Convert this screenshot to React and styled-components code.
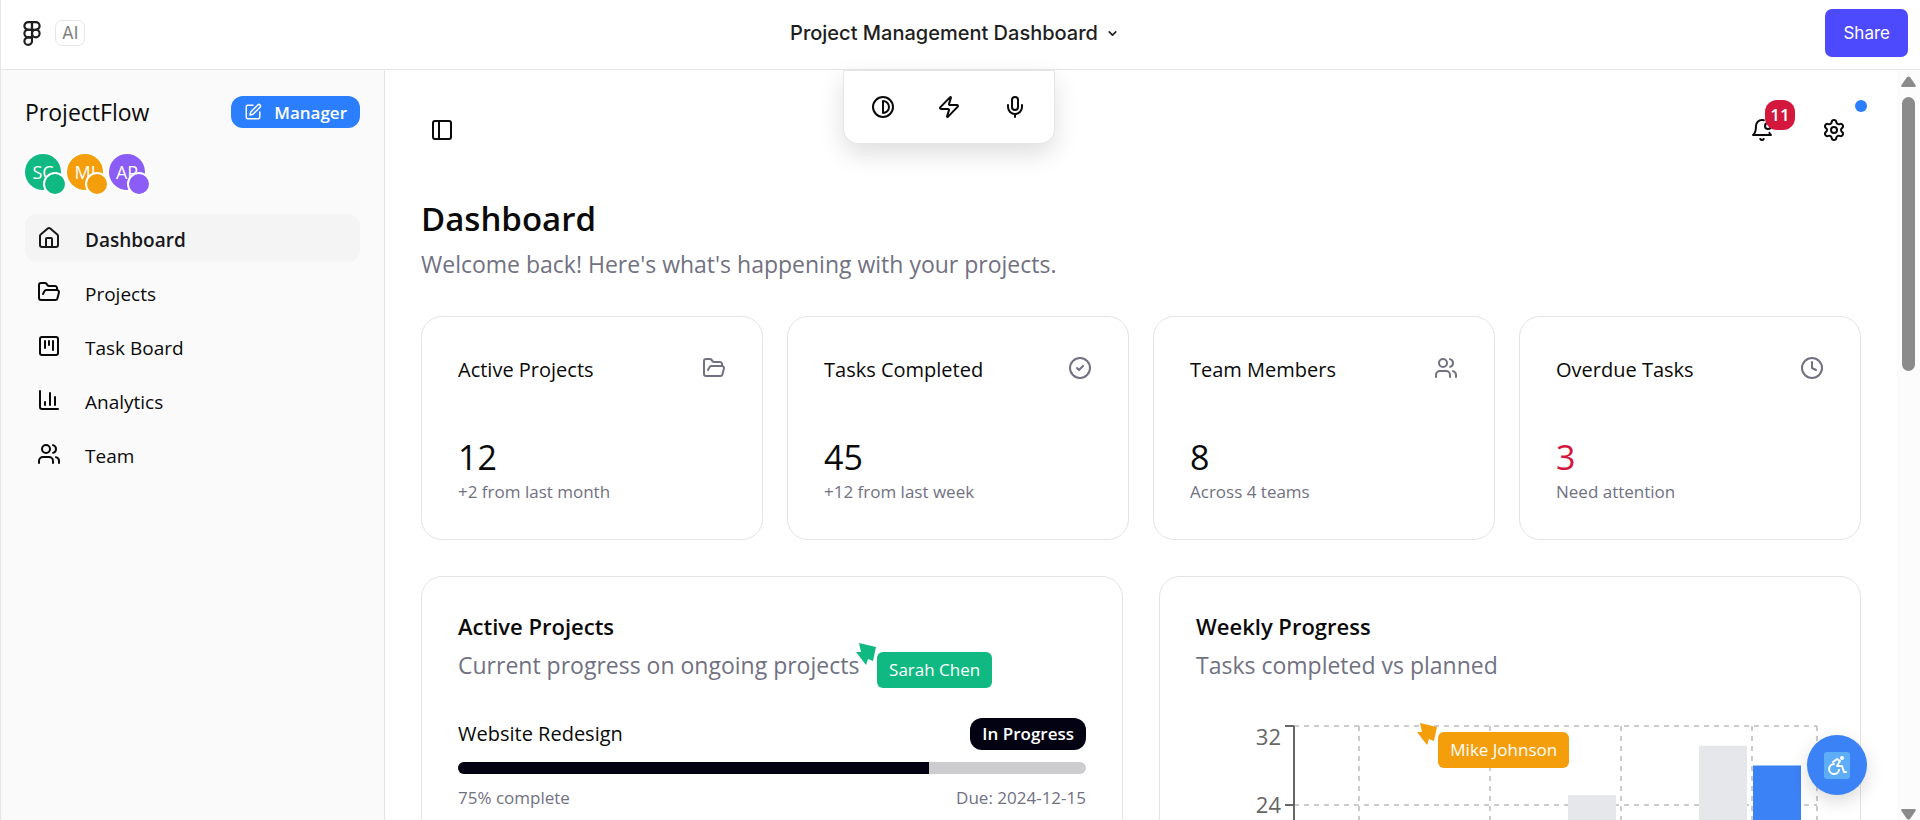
import React from "react";
import styled, { createGlobalStyle } from "styled-components";
import {
  ChartColumn, ChevronDown, CircleCheck, Clock, Contrast, Figma, FolderOpen, House,
  Mic, PanelLeft, Settings, SquareKanban, SquarePen, Users, Zap,
} from "lucide-react";

const GlobalStyle = createGlobalStyle`
  *, *::before, *::after { box-sizing: border-box; }
  body { margin: 0; background: #fff; color: #0a0a0a; font-family: "Open Sans", "Noto Sans", sans-serif; }
  h1, h2, h3, p, ul { margin: 0; padding: 0; font-weight: 400; }
  button { font: inherit; color: inherit; border: 0; padding: 0; background: none; cursor: pointer; }
  svg { display: block; flex: none; }
`;

const Shell = styled.div`
  display: flex;
  flex-direction: column;
  height: 100vh;
  overflow: hidden;
  border-left: 1px solid #e6e6e6;
`;

const TopBar = styled.header`
  display: grid;
  grid-template-columns: 1fr auto 1fr;
  align-items: center;
  flex: none;
  height: 70px;
  padding: 0 12px 3px 18px;
  border-bottom: 1px solid #e6e6e6;
  font-family: Inter, sans-serif;
`;

const Brand = styled.div`
  display: flex;
  align-items: center;
  gap: 10px;
  color: #1e1e1e;
`;

const AiTag = styled.span`
  padding: 0 6px;
  border: 1px solid #e6e6e6;
  border-radius: 7px;
  color: #808080;
  font-size: 17px;
  line-height: 24px;
`;

const FileName = styled.button`
  display: flex;
  align-items: center;
  gap: 8px;
  padding-right: 18px;
  color: #1e1e1e;
  font-size: 20px;
  font-weight: 500;
  line-height: 28px;
`;

const ShareButton = styled.button`
  justify-self: end;
  height: 48px;
  padding: 0 18px;
  border-radius: 7px;
  background: #4d49fc;
  color: #fff;
  font-size: 17px;
`;

const Body = styled.div`
  display: flex;
  flex: 1;
  min-height: 0;
`;

const Frame = styled.div`
  position: relative;
  display: flex;
  flex: 1;
  min-width: 0;
`;

const Tray = styled.div`
  position: absolute;
  top: 0;
  left: 50%;
  transform: translateX(-50%);
  z-index: 2;
  display: flex;
  gap: 18px;
  padding: 12px 15px;
  border: 1px solid #e6e6e6;
  border-radius: 0 0 15px 15px;
  background: #fff;
  box-shadow: 0 10px 24px rgba(0, 0, 0, 0.13);
`;

const IconButton = styled.button`
  position: relative;
  display: grid;
  place-items: center;
  width: ${(p) => p.$width}px;
  height: 48px;
`;

const Sidebar = styled.aside`
  flex: none;
  width: 384px;
  padding: 24px;
  border-right: 1px solid #e4e4e6;
  background: #fafafa;
`;

const SidebarHead = styled.div`
  display: flex;
  align-items: center;
  justify-content: space-between;
  height: 36px;
`;

const AppName = styled.span`
  font-size: 23px;
  line-height: 36px;
`;

const RoleBadge = styled.button`
  display: flex;
  align-items: center;
  gap: 12px;
  height: 32px;
  padding: 0 13px;
  border-radius: 12px;
  background: #2b7fff;
  color: #fff;
  font-size: 17px;
  font-weight: 600;
`;

const Avatars = styled.div`
  display: flex;
  gap: 6px;
  margin: 24px 0;
`;

const Avatar = styled.span`
  position: relative;
  width: 36px;
  height: 36px;
  border-radius: 50%;
  background: ${(p) => p.$color};
  box-shadow: 0 0 0 2px #fff;
  color: #fff;
  font-size: 18px;
  line-height: 36px;
  text-align: center;

  &::after {
    content: "";
    position: absolute;
    right: -6px;
    bottom: -6px;
    width: 24px;
    height: 24px;
    border: 2px solid #fff;
    border-radius: 50%;
    background: ${(p) => p.$color};
  }
`;

const Nav = styled.nav`
  display: flex;
  flex-direction: column;
  gap: 6px;
`;

const NavLink = styled.a`
  display: flex;
  align-items: center;
  gap: 24px;
  height: 48px;
  padding: 0 12px;
  border-radius: 12px;
  background: ${(p) => (p.$active ? "#f4f4f5" : "transparent")};
  color: ${(p) => (p.$active ? "#18181b" : "#0a0a0a")};
  font-size: 19px;
  font-weight: ${(p) => (p.$active ? 600 : 400)};
  line-height: 26px;
  text-decoration: none;
`;

const NavLabel = styled.span`
  padding-top: 3px;
`;

const Main = styled.main`
  display: flex;
  flex: 1;
  flex-direction: column;
  gap: 36px;
  min-width: 0;
  padding: 36px 36px 0;
  overflow: hidden;
`;

const Tools = styled.div`
  display: flex;
  align-items: center;
  gap: 18px;

  & > :first-child { margin-right: auto; }
`;

const Count = styled.span`
  position: absolute;
  top: -6px;
  right: -6px;
  width: 30px;
  height: 30px;
  border-radius: 12px;
  background: #d4183d;
  color: #fff;
  font-size: 17px;
  font-weight: 600;
  line-height: 30px;
`;

const StatusDot = styled.span`
  position: absolute;
  top: -6px;
  right: -6px;
  width: 12px;
  height: 12px;
  border-radius: 50%;
  background: #2b7fff;
`;

const PageTitle = styled.h1`
  font-size: 33px;
  font-weight: 600;
  line-height: 58px;
`;

const Lead = styled.p`
  color: #717182;
  font-size: 23px;
  line-height: 32px;
`;

const Grid = styled.section`
  display: grid;
  grid-template-columns: repeat(${(p) => p.$columns}, minmax(0, 1fr));
  gap: ${(p) => p.$gap}px;
  flex: none;
`;

const Card = styled.article`
  padding: 36px;
  border: 1px solid #e4e4e6;
  border-radius: 21px;
  background: #fff;
`;

const StatHead = styled.div`
  display: flex;
  justify-content: space-between;
  height: 80px;
  padding-top: 3px;
  color: #717182;
`;

const StatLabel = styled.h2`
  color: #0a0a0a;
  font-size: 20px;
  line-height: 28px;
`;

const StatValue = styled.p`
  color: ${(p) => (p.$alert ? "#d4183d" : "#0a0a0a")};
  font-size: 34px;
  line-height: 48px;
`;

const Small = styled.p`
  color: #717182;
  font-size: 17px;
  line-height: 22px;
`;

const CardTitle = styled.h2`
  margin-bottom: 10px;
  font-size: 22px;
  font-weight: 600;
  line-height: 26px;
`;

const CardBody = styled.div`
  display: flex;
  flex-direction: column;
  gap: 12px;
  margin-top: 37px;
`;

const Split = styled.div`
  display: flex;
  align-items: center;
  justify-content: space-between;
  min-height: 24px;
`;

const ProjectName = styled.h3`
  font-size: 20px;
  line-height: 32px;
`;

const StatusBadge = styled.span`
  padding: 0 12px;
  border-radius: 12px;
  background: #030213;
  color: #fff;
  font-size: 17px;
  font-weight: 600;
  line-height: 32px;
`;

const Track = styled.div`
  height: 12px;
  border-radius: 6px;
  background: #cdcdd0;
  overflow: hidden;
`;

const Fill = styled.div`
  height: 100%;
  background: #030213;
`;

const Chart = styled.svg`
  width: 100%;
  margin-top: 37px;
  font-size: 22px;
`;

const Pointer = styled.div`
  position: absolute;
  left: ${(p) => p.$x}%;
  top: ${(p) => p.$y}px;
  z-index: 2;
  display: flex;
  color: ${(p) => p.$color};
`;

const PointerName = styled.span`
  margin-top: 10px;
  padding: 0 12px;
  border-radius: 6px;
  background: ${(p) => p.$color};
  color: #fff;
  font-size: 17px;
  line-height: 36px;
  white-space: nowrap;
`;

const ScrollBar = styled.div`
  display: flex;
  flex: none;
  flex-direction: column;
  align-items: center;
  width: 23px;
  padding-top: 6px;
  background: #fcfcfc;
  color: #8b8b8b;
`;

const ScrollTrack = styled.div`
  flex: 1;
  width: 13px;
  padding: 9px 0;
`;

const ScrollThumb = styled.div`
  height: 39%;
  border-radius: 7px;
  background: #8b8b8b;
`;

const HelpButton = styled.button`
  position: absolute;
  right: 30px;
  bottom: 25px;
  z-index: 3;
  display: grid;
  place-items: center;
  width: 60px;
  height: 60px;
  border-radius: 50%;
  background: #3b82f6;
  box-shadow: 0 6px 18px rgba(0, 0, 0, 0.15);
`;

const people = [
  { initials: "SC", color: "#10b981" },
  { initials: "MJ", color: "#f59e0b" },
  { initials: "AP", color: "#8b5cf6" },
];

const links = [
  { label: "Dashboard", icon: House, active: true },
  { label: "Projects", icon: FolderOpen },
  { label: "Task Board", icon: SquareKanban },
  { label: "Analytics", icon: ChartColumn },
  { label: "Team", icon: Users },
];

const stats = [
  { label: "Active Projects", value: 12, note: "+2 from last month", icon: FolderOpen },
  { label: "Tasks Completed", value: 45, note: "+12 from last week", icon: CircleCheck },
  { label: "Team Members", value: 8, note: "Across 4 teams", icon: Users },
  { label: "Overdue Tasks", value: 3, note: "Need attention", icon: Clock, alert: true },
];

const weeks = [
  { planned: 20, completed: 18 },
  { planned: 22, completed: 20 },
  { planned: 25, completed: 22 },
  { planned: 30, completed: 28 },
];

const PLOT = { left: 98, right: 621, top: 8, bottom: 324 };
const yOf = (value) => PLOT.bottom - (value * (PLOT.bottom - PLOT.top)) / 32;
const xOf = (index) => PLOT.left + 65 + index * 131;

function BellDot() {
  return (
    <svg width="24" height="24" viewBox="0 0 24 24" fill="none" stroke="currentColor" strokeWidth="2" strokeLinecap="round" strokeLinejoin="round">
      <path d="M19.4 14.9C20.2 16.4 21 17 21 17H3s3-2 3-9c0-3.3 2.7-6 6-6 .7 0 1.3.1 1.9.3" />
      <path d="M10.3 21a1.94 1.94 0 0 0 3.4 0" />
      <circle cx="18" cy="8" r="3" />
    </svg>
  );
}

function WeeklyChart() {
  return (
    <Chart viewBox="0 0 628 372" role="img" aria-label="Tasks completed vs planned by week">
      <g stroke="#ccc" strokeWidth="2" strokeDasharray="5 5">
        {[32, 24, 16, 8].map((v) => <path key={v} d={`M${PLOT.left} ${yOf(v)}H${PLOT.right}`} />)}
        {weeks.map((w, i) => <path key={i} d={`M${xOf(i)} ${PLOT.top}V${PLOT.bottom}`} />)}
        <path d={`M${PLOT.right} ${PLOT.top}V${PLOT.bottom}`} />
      </g>
      {weeks.map((w, i) => (
        <g key={i}>
          <rect x={xOf(i) - 53} y={yOf(w.planned)} width="48" height={PLOT.bottom - yOf(w.planned)} fill="#e5e7eb" />
          <rect x={xOf(i) + 1} y={yOf(w.completed)} width="48" height={PLOT.bottom - yOf(w.completed)} fill="#3b82f6" />
        </g>
      ))}
      <g stroke="#666" strokeWidth="2" fill="none">
        <path d={`M${PLOT.left} ${PLOT.top}V${PLOT.bottom}H${PLOT.right}`} />
        {[32, 24, 16, 8].map((v) => <path key={v} d={`M${PLOT.left - 9} ${yOf(v)}h9`} />)}
      </g>
      <g fill="#666" textAnchor="end">
        <text x="85" y="27">32</text>
        <text x="85" y={yOf(24) + 8}>24</text>
      </g>
    </Chart>
  );
}

function NamedPointer({ x, y, color, name }) {
  return (
    <Pointer $x={x} $y={y} $color={color}>
      <svg width="21" height="24" viewBox="0 0 21 24" fill="currentColor">
        <path d="M3 1 20 5 17 19 12 17 10 23 0 10 5 10Z" />
      </svg>
      <PointerName $color={color}>{name}</PointerName>
    </Pointer>
  );
}

export default function App() {
  return (
    <Shell>
      <GlobalStyle />
      <TopBar>
        <Brand>
          <Figma size={26} strokeWidth={2} />
          <AiTag>AI</AiTag>
        </Brand>
        <FileName>
          Project Management Dashboard
          <ChevronDown size={13} strokeWidth={3} />
        </FileName>
        <ShareButton>Share</ShareButton>
      </TopBar>
      <Body>
        <Frame>
          <Tray>
            <IconButton $width={48} aria-label="Contrast"><Contrast size={24} /></IconButton>
            <IconButton $width={48} aria-label="Quick actions"><Zap size={24} /></IconButton>
            <IconButton $width={48} aria-label="Voice"><Mic size={24} /></IconButton>
          </Tray>
          <Sidebar>
            <SidebarHead>
              <AppName>ProjectFlow</AppName>
              <RoleBadge><SquarePen size={18} />Manager</RoleBadge>
            </SidebarHead>
            <Avatars>
              {people.map((p) => <Avatar key={p.initials} $color={p.color}>{p.initials}</Avatar>)}
            </Avatars>
            <Nav>
              {links.map(({ label, icon: Icon, active }) => (
                <NavLink key={label} href="#" $active={active}>
                  <Icon size={24} />
                  <NavLabel>{label}</NavLabel>
                </NavLink>
              ))}
            </Nav>
          </Sidebar>
          <Main>
            <Tools>
              <IconButton $width={42} aria-label="Toggle sidebar"><PanelLeft size={24} /></IconButton>
              <IconButton $width={54} aria-label="Notifications"><BellDot /><Count>11</Count></IconButton>
              <IconButton $width={54} aria-label="Settings"><Settings size={24} /><StatusDot /></IconButton>
            </Tools>
            <div>
              <PageTitle>Dashboard</PageTitle>
              <Lead>Welcome back! Here's what's happening with your projects.</Lead>
            </div>
            <Grid $columns={4} $gap={24}>
              {stats.map(({ label, value, note, icon: Icon, alert }) => (
                <Card key={label}>
                  <StatHead><StatLabel>{label}</StatLabel><Icon size={24} /></StatHead>
                  <StatValue $alert={alert}>{value}</StatValue>
                  <Small>{note}</Small>
                </Card>
              ))}
            </Grid>
            <Grid $columns={2} $gap={36}>
              <Card>
                <CardTitle>Active Projects</CardTitle>
                <Lead>Current progress on ongoing projects</Lead>
                <CardBody>
                  <Split>
                    <ProjectName>Website Redesign</ProjectName>
                    <StatusBadge>In Progress</StatusBadge>
                  </Split>
                  <Track><Fill style={{ width: "75%" }} /></Track>
                  <Split>
                    <Small>75% complete</Small>
                    <Small>Due: 2024-12-15</Small>
                  </Split>
                </CardBody>
              </Card>
              <Card>
                <CardTitle>Weekly Progress</CardTitle>
                <Lead>Tasks completed vs planned</Lead>
                <WeeklyChart />
              </Card>
            </Grid>
          </Main>
          <NamedPointer x={45.1} y={572} color="#10b981" name="Sarah Chen" />
          <NamedPointer x={74.7} y={652} color="#f59e0b" name="Mike Johnson" />
          <HelpButton aria-label="Accessibility">
            <svg width="26" height="27" viewBox="0 0 26 27" fill="none" stroke="#fff" strokeWidth="2" strokeLinecap="round" strokeLinejoin="round">
              <rect width="26" height="27" rx="3" fill="#5eaef7" stroke="none" />
              <circle cx="18" cy="6" r="2" fill="#fff" stroke="none" />
              <path d="M9 10 13 7 16 9 13 14H18L20 20H22M10 12A5 5 0 1 0 15 18" />
            </svg>
          </HelpButton>
        </Frame>
        <ScrollBar aria-hidden="true">
          <svg width="15" height="12" viewBox="0 0 15 12" fill="currentColor"><path d="M6 1q1.500-1 3 0l5.500 8q1 2-1 2H1.500q-2 0-1-2Z" /></svg>
          <ScrollTrack><ScrollThumb /></ScrollTrack>
          <svg width="15" height="12" viewBox="0 0 15 12" fill="currentColor"><path d="M6 11q1.500 1 3 0l5.500-8q1-2-1-2H1.500q-2 0-1 2Z" /></svg>
        </ScrollBar>
      </Body>
    </Shell>
  );
}
